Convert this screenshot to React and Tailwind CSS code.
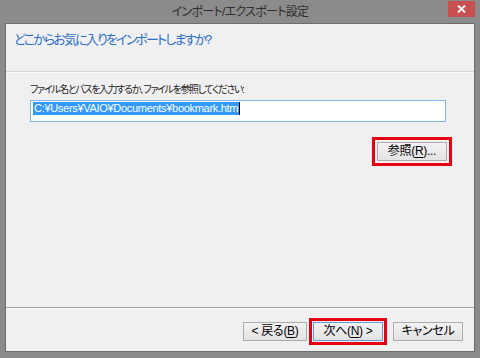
export default function App() {
  const font = "[font-family:'Liberation_Sans','Noto_Sans_CJK_JP',sans-serif] [font-feature-settings:'palt']";
  const btn =
    "h-[19px] border border-[#acacac] bg-gradient-to-b from-[#f2f2f2] to-[#e3e3e3] text-[12px] leading-[17px] text-black flex items-center justify-center tracking-[-0.3px]";
  return (
    <div className={`w-[480px] h-[358px] bg-[#8b8b8b] flex flex-col ${font}`}>
      {/* title bar */}
      <div className="h-[23px] grid grid-cols-[1fr_auto_1fr] items-start">
        <div />
        <div className="pt-[5px] text-[12px] leading-[14px] text-[#2e2e2e] tracking-[-0.7px]">
          インポート/エクスポート設定
        </div>
        <div className="flex justify-end pr-[5px] pt-[1px]">
          <div className="w-[27px] h-[16px] bg-[#c75050] flex items-center justify-center">
            <svg width="9" height="8" viewBox="0 0 9 8">
              <path d="M1 0.5 L8 7.5 M8 0.5 L1 7.5" stroke="white" strokeWidth="1.8" />
            </svg>
          </div>
        </div>
      </div>
      {/* content */}
      <div className="mx-[5px] h-[329px] border border-[#6e6e6e] bg-[#f0f0f0] flex flex-col">
        <div className="h-[47px] pl-[8px] pt-[8px]">
          <div className="text-[13px] leading-[16px] text-[#2f6fc6] tracking-[-1.85px]">
            どこからお気に入りをインポートしますか?
          </div>
        </div>
        <div className="h-[1px] bg-[#d4d4d4]" />
        <div className="h-[1px] bg-[#fbfbfb]" />
        <div className="flex-1 flex flex-col pl-[24px] pr-[28px] pt-[10px]">
          <div className="text-[10px] leading-[13px] text-[#1e1e1e] tracking-[-1.35px]">
            ファイル名とパスを入力するか、ファイルを参照してください:
          </div>
          <div className="mt-[4px] h-[22px] border border-[#7eb4ea] bg-white flex items-start pl-[2px] pt-[1px]">
            <span className="bg-[#3399ff] text-white text-[11px] leading-[13px] h-[13px] pl-[1px] pr-[1px] tracking-[-0.3px]">
              C:¥Users¥VAIO¥Documents¥bookmark.htm
            </span>
            <span className="w-[1px] h-[13px] bg-black" />
          </div>
          <div className="mt-[20px] flex justify-end mr-[-1px]">
            <button
              className={`${btn} w-[70px] h-[18px] outline-[3px] outline-solid outline-[#e60012] outline-offset-[2px]`}
            >
              参照(<span className="underline underline-offset-2">R</span>)...
            </button>
          </div>
        </div>
        <div className="h-[1px] bg-[#a0a0a0]" />
        <div className="h-[1px] bg-[#f9f9f9]" />
        <div className="h-[42px] flex items-start justify-end pt-[13px] pr-[11px]">
          <button className={`${btn} w-[64px]`}>
            &lt; 戻る(<span className="underline underline-offset-2">B</span>)
          </button>
          <button
            className={`${btn} w-[70px] ml-[6px] !border-[#5f9fdc] outline-[3px] outline-solid outline-[#e60012] outline-offset-[1px]`}
          >
            次へ(<span className="underline underline-offset-2">N</span>) &gt;
          </button>
          <button className={`${btn} w-[70px] ml-[10px]`}>キャンセル</button>
        </div>
      </div>
    </div>
  );
}
